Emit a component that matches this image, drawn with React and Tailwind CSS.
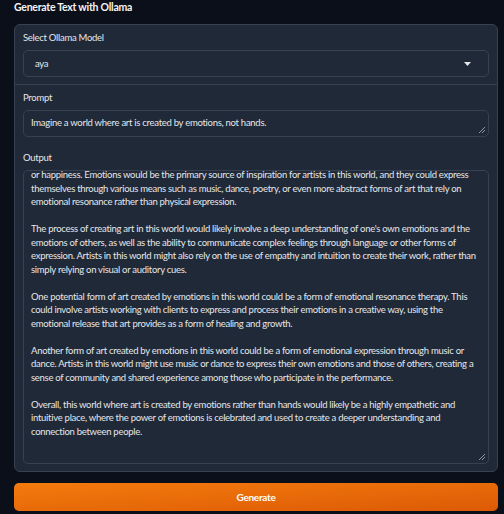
import React from "react";

const outputLines = [
  "or happiness. Emotions would be the primary source of inspiration for artists in this world, and they could express",
  "themselves through various means such as music, dance, poetry, or even more abstract forms of art that rely on",
  "emotional resonance rather than physical expression.",
  "",
  "The process of creating art in this world would likely involve a deep understanding of one's own emotions and the",
  "emotions of others, as well as the ability to communicate complex feelings through language or other forms of",
  "expression. Artists in this world might also rely on the use of empathy and intuition to create their work, rather than",
  "simply relying on visual or auditory cues.",
  "",
  "One potential form of art created by emotions in this world could be a form of emotional resonance therapy. This",
  "could involve artists working with clients to express and process their emotions in a creative way, using the",
  "emotional release that art provides as a form of healing and growth.",
  "",
  "Another form of art created by emotions in this world could be a form of emotional expression through music or",
  "dance. Artists in this world might use music or dance to express their own emotions and those of others, creating a",
  "sense of community and shared experience among those who participate in the performance.",
  "",
  "Overall, this world where art is created by emotions rather than hands would likely be a highly empathetic and",
  "intuitive place, where the power of emotions is celebrated and used to create a deeper understanding and",
  "connection between people.",
];

function ResizeHandle() {
  return (
    <svg className="absolute right-[3px] bottom-[3px]" width="7" height="7" viewBox="0 0 7 7">
      <line x1="1" y1="7" x2="7" y2="1" stroke="#9ca3af" strokeWidth="0.9" />
      <line x1="4" y1="7" x2="7" y2="4" stroke="#9ca3af" strokeWidth="0.9" />
    </svg>
  );
}

export default function App() {
  return (
    <div className="w-[504px] h-[514px] bg-[#0b0f19] overflow-hidden font-['Lato',sans-serif] text-[#e5e7eb] text-[9.5px] tracking-[-0.28px] px-[14px] relative">
      <div className="h-[24px] pt-[1px] text-[10.5px] leading-[12px] font-bold text-[#f3f4f6] tracking-[-0.25px]">
        Generate Text with Ollama
      </div>
      <div className="w-[484px] border border-[#374151] rounded-[6px] bg-[#1f2937]">
        <div className="px-[8px] pt-[6px] pb-[7px] border-b border-[#374151]">
          <div className="h-[14px] leading-[14px] text-[#e5e7eb]">Select Ollama Model</div>
          <div className="mt-[5px] h-[27px] border border-[#374151] rounded-[5px] flex items-center justify-between pl-[11px] pr-[17px] pt-[1px]">
            <span>aya</span>
            <svg width="7" height="4" viewBox="0 0 7 4">
              <polygon points="0,0 7,0 3.5,4" fill="#e5e7eb" />
            </svg>
          </div>
        </div>
        <div className="px-[8px] pt-[6px] pb-[7px]">
          <div className="h-[14px] leading-[14px]">Prompt</div>
          <div className="relative mt-[5px] h-[27px] border border-[#374151] rounded-[5px] flex items-center pl-[7px]">
            <span>Imagine a world where art is created by emotions, not hands.</span>
            <ResizeHandle />
          </div>
          <div className="h-[14px] leading-[14px] mt-[14px]">Output</div>
          <div className="relative mt-[5px] h-[294px] border border-[#374151] rounded-[5px] overflow-hidden pl-[7px]">
            <div className="-mt-[3px] leading-[13.5px]">
              {outputLines.map((l, i) => (
                <div key={i} className="h-[13.5px] whitespace-pre">{l}</div>
              ))}
            </div>
            <ResizeHandle />
          </div>
        </div>
      </div>
      <button className="mt-[11px] w-[484px] h-[28px] rounded-[5px] bg-gradient-to-br from-[#f47b0d] to-[#dc5a06] text-white font-bold text-[10px]">
        Generate
      </button>
    </div>
  );
}
